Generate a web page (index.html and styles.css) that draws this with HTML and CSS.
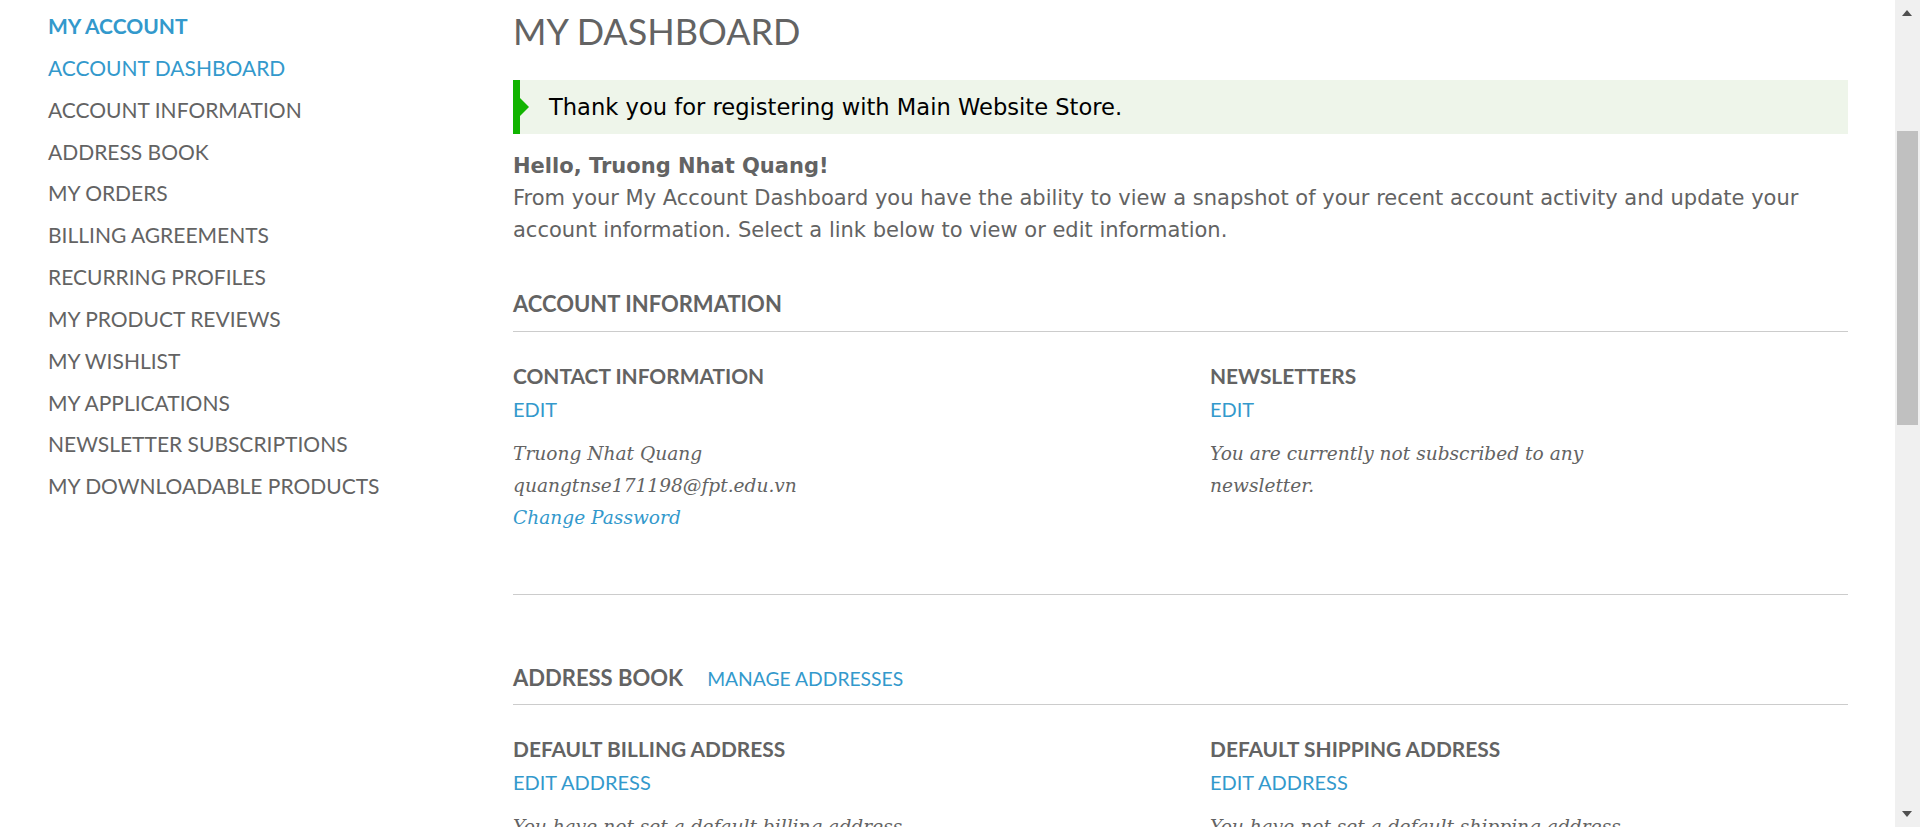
FILE: index.html
```html
<!DOCTYPE html>
<html lang="en">
<head>
<meta charset="utf-8">
<title>My Dashboard</title>
<link rel="stylesheet" href="styles.css">
</head>
<body>
<div class="page">
  <aside class="sidebar">
    <div class="side-title">MY ACCOUNT</div>
    <ul class="side-nav">
      <li class="current">ACCOUNT DASHBOARD</li>
      <li>ACCOUNT INFORMATION</li>
      <li>ADDRESS BOOK</li>
      <li>MY ORDERS</li>
      <li>BILLING AGREEMENTS</li>
      <li>RECURRING PROFILES</li>
      <li>MY PRODUCT REVIEWS</li>
      <li>MY WISHLIST</li>
      <li>MY APPLICATIONS</li>
      <li>NEWSLETTER SUBSCRIPTIONS</li>
      <li>MY DOWNLOADABLE PRODUCTS</li>
    </ul>
  </aside>
  <main class="main">
    <h1 class="page-title">MY DASHBOARD</h1>
    <div class="msg-success"><span class="msg-text">Thank you for registering with Main Website Store.</span></div>
    <p class="hello">Hello, Truong Nhat Quang!</p>
    <p class="intro">From your My Account Dashboard you have the ability to view a snapshot of your recent account activity and update your account information. Select a link below to view or edit information.</p>

    <div class="section-head first"><h2>ACCOUNT INFORMATION</h2></div>
    <div class="col2">
      <div class="box">
        <h3>CONTACT INFORMATION</h3>
        <a class="edit">EDIT</a>
        <p class="box-text">Truong Nhat Quang<br>quangtnse171198@fpt.edu.vn<br><a class="italic-link">Change Password</a></p>
      </div>
      <div class="box">
        <h3>NEWSLETTERS</h3>
        <a class="edit">EDIT</a>
        <p class="box-text narrow">You are currently not subscribed to any newsletter.</p>
      </div>
    </div>
    <div class="separator"></div>

    <div class="section-head second"><h2>ADDRESS BOOK</h2><a class="manage">MANAGE ADDRESSES</a></div>
    <div class="col2">
      <div class="box">
        <h3>DEFAULT BILLING ADDRESS</h3>
        <a class="edit">EDIT ADDRESS</a>
        <p class="box-text">You have not set a default billing address.</p>
      </div>
      <div class="box">
        <h3>DEFAULT SHIPPING ADDRESS</h3>
        <a class="edit">EDIT ADDRESS</a>
        <p class="box-text">You have not set a default shipping address.</p>
      </div>
    </div>
  </main>
</div>
<div class="scrollbar">
  <span class="arrow-up"></span>
  <span class="thumb"></span>
  <span class="arrow-down"></span>
</div>
</body>
</html>
```

FILE: styles.css
```css
html, body {
  margin: 0;
  padding: 0;
  height: 827px;
  overflow: hidden;
  background: #fff;
}
body {
  font-family: "DejaVu Sans", Verdana, sans-serif;
  color: #636363;
}
.page {
  display: flex;
  width: 1895px;
}
.sidebar {
  width: 465px;
  padding: 5px 0 0 48px;
  font-family: Lato, "Open Sans", sans-serif;
}
.side-title {
  font-size: 21px;
  line-height: 41.85px;
  font-weight: 700;
  color: #3399cc;
}
.side-nav {
  list-style: none;
  margin: 0;
  padding: 0;
}
.side-nav li {
  font-size: 21px;
  line-height: 41.85px;
  color: #636363;
}
.side-nav li.current {
  color: #3399cc;
}
.main {
  width: 1335px;
  display: flex;
  flex-direction: column;
}
.page-title {
  margin: 0;
  padding-top: 6px;
  font-family: Lato, "Open Sans", sans-serif;
  font-weight: 400;
  font-size: 36px;
  line-height: 50px;
  color: #636363;
}
.msg-success {
  margin-top: 24px;
  height: 54px;
  background: #eef5ea;
  display: flex;
  align-items: center;
  padding-left: 36px;
  position: relative;
  border-left: 7px solid #11b400;
  box-sizing: border-box;
}
.msg-success::before {
  content: "";
  position: absolute;
  left: 0;
  top: 18px;
  border-top: 9px solid transparent;
  border-bottom: 9px solid transparent;
  border-left: 9px solid #11b400;
}
.msg-text {
  font-size: 22.6px;
  color: #000;
  margin-left: -7px;
}
.hello {
  margin: 16px 0 0;
  font-weight: 700;
  font-size: 21px;
  line-height: 32px;
}
.intro {
  margin: 0;
  font-size: 21px;
  line-height: 32px;
}
.section-head {
  display: flex;
  align-items: baseline;
  gap: 24px;
  border-bottom: 1px solid #cccccc;
  padding-bottom: 12px;
}
.section-head.first {
  margin-top: 43px;
}
.section-head.second {
  margin-top: 68px;
  padding-bottom: 11px;
}
.section-head h2 {
  margin: 0;
  font-family: Lato, "Open Sans", sans-serif;
  font-weight: 700;
  font-size: 22px;
  line-height: 30px;
  color: #636363;
}
.manage {
  font-family: Lato, "Open Sans", sans-serif;
  font-size: 19.3px;
  color: #3399cc;
}
.col2 {
  display: grid;
  grid-template-columns: 697px 1fr;
  margin-top: 30px;
}
.box {
  display: flex;
  flex-direction: column;
  align-items: flex-start;
}
.box h3 {
  margin: 0;
  font-family: Lato, "Open Sans", sans-serif;
  font-weight: 700;
  font-size: 20.9px;
  line-height: 28px;
  color: #636363;
}
.edit {
  margin-top: 6px;
  font-family: Lato, "Open Sans", sans-serif;
  font-size: 20px;
  line-height: 26px;
  color: #3399cc;
}
.box-text {
  margin: 16px 0 0;
  font-family: "DejaVu Serif", Georgia, serif;
  font-style: italic;
  font-size: 18.6px;
  line-height: 32px;
  color: #636363;
}
.box-text.narrow {
  max-width: 420px;
}
.italic-link {
  color: #3399cc;
}
.separator {
  margin-top: 60px;
  border-top: 1px solid #cccccc;
}
.scrollbar {
  position: fixed;
  top: 0;
  right: 0;
  width: 25px;
  height: 827px;
  background: #f0f0f0;
}
.thumb {
  position: absolute;
  left: 2px;
  top: 131px;
  width: 21px;
  height: 294px;
  background: #c0c0c0;
}
.arrow-up {
  position: absolute;
  left: 7px;
  top: 10px;
  border-left: 5.5px solid transparent;
  border-right: 5.5px solid transparent;
  border-bottom: 6px solid #505050;
}
.arrow-down {
  position: absolute;
  left: 7px;
  top: 811px;
  border-left: 5.5px solid transparent;
  border-right: 5.5px solid transparent;
  border-top: 6px solid #505050;
}
```
